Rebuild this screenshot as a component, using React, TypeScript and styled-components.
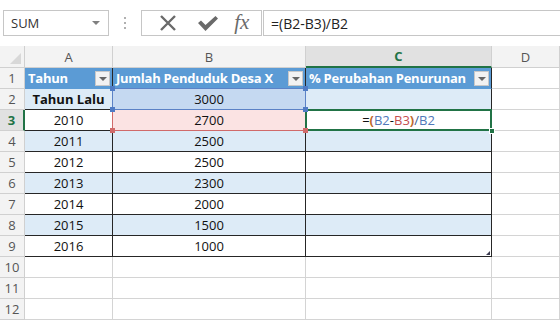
import React from "react";
import styled, { createGlobalStyle } from "styled-components";

const Global = createGlobalStyle`
  html, body { margin: 0; padding: 0; background: #fff; }
  body { font-family: "Open Sans", "Noto Sans", sans-serif; overflow: hidden; }
  * { box-sizing: border-box; }
`;

const Page = styled.div`
  width: 560px;
  height: 321px;
  overflow: hidden;
  background: #fff;
`;

const Toolbar = styled.div`
  height: 46px;
  display: flex;
  align-items: flex-start;
  padding: 10px 0 0 3px;
`;

const NameBox = styled.div`
  width: 106px;
  height: 26px;
  border: 1px solid #c6c6c6;
  display: flex;
  align-items: center;
  justify-content: space-between;
  padding: 0 8px 0 7px;
  font-size: 13px;
  color: #333;
`;

const SmallArrow = styled.span`
  width: 0;
  height: 0;
  border-left: 4px solid transparent;
  border-right: 4px solid transparent;
  border-top: 4px solid #808080;
`;

const Dots = styled.div`
  width: 32px;
  height: 26px;
  display: flex;
  flex-direction: column;
  align-items: center;
  justify-content: center;
  gap: 3px;
  span {
    width: 2px;
    height: 2px;
    background: #b0b0b0;
  }
`;

const ButtonBox = styled.div`
  width: 121px;
  height: 26px;
  border: 1px solid #c6c6c6;
  display: flex;
  align-items: center;
  justify-content: space-around;
  padding: 0 2px 0 6px;
`;

const Fx = styled.span`
  font-family: "Liberation Serif", "DejaVu Serif", serif;
  font-style: italic;
  font-size: 21px;
  color: #6a6a6a;
  line-height: 1;
  margin-top: -2px;
  margin-left: -4px;
`;

const FormulaInput = styled.div`
  flex: 1;
  height: 26px;
  border: 1px solid #c6c6c6;
  border-right: none;
  margin-left: 1px;
  display: flex;
  align-items: center;
  padding-left: 7px;
  font-size: 14px;
  color: #222;
`;

const Sheet = styled.div`
  display: grid;
  grid-template-columns: 25px 88px 193px 186px 1fr;
  grid-template-rows: 22px repeat(12, 21px);
`;

const HeadCell = styled.div<{ $sel?: boolean }>`
  position: relative;
  background: ${(p) => (p.$sel ? "#e1e1e1" : "#f3f3f3")};
  border-right: 1px solid #d0d0d0;
  border-bottom: ${(p) => (p.$sel ? "2px solid #217346" : "1px solid #d0d0d0")};
  display: flex;
  align-items: center;
  justify-content: center;
  font-size: 13px;
  color: ${(p) => (p.$sel ? "#217346" : "#555")};
  font-weight: ${(p) => (p.$sel ? 700 : 400)};
`;

const CornerTri = styled.span`
  position: absolute;
  right: 3px;
  bottom: 3px;
  width: 0;
  height: 0;
  border-left: 11px solid transparent;
  border-bottom: 11px solid #d8d8d8;
`;

const RowHead = styled.div<{ $sel?: boolean }>`
  background: ${(p) => (p.$sel ? "#e1e1e1" : "#f3f3f3")};
  border-right: ${(p) => (p.$sel ? "2px solid #217346" : "1px solid #d0d0d0")};
  border-bottom: 1px solid #d0d0d0;
  display: flex;
  align-items: center;
  justify-content: center;
  font-size: 13px;
  color: ${(p) => (p.$sel ? "#217346" : "#555")};
  font-weight: ${(p) => (p.$sel ? 700 : 400)};
`;

const Cell = styled.div<{
  $bg?: string;
  $bold?: boolean;
  $color?: string;
  $align?: string;
  $right?: string;
  $bottom?: string;
}>`
  position: relative;
  background: ${(p) => p.$bg || "#fff"};
  border-right: 1px solid ${(p) => p.$right || "#d4d4d4"};
  border-bottom: 1px solid ${(p) => p.$bottom || "#d4d4d4"};
  display: flex;
  align-items: center;
  justify-content: ${(p) => p.$align || "center"};
  padding: 0 3px;
  font-size: 13px;
  color: ${(p) => p.$color || "#111"};
  font-weight: ${(p) => (p.$bold ? 700 : 400)};
  white-space: nowrap;
`;

const TableHead = styled(Cell)`
  background: #5b9bd5;
  color: #fff;
  font-weight: 700;
  justify-content: flex-start;
  letter-spacing: -0.25px;
  border-bottom-color: #5b9bd5;
`;

const FilterBtn = styled.span`
  position: absolute;
  right: 2px;
  top: 3px;
  width: 15px;
  height: 15px;
  background: #f2f2f2;
  border: 1px solid #c8c8c8;
  display: flex;
  align-items: center;
  justify-content: center;
  &::after {
    content: "";
    border-left: 4px solid transparent;
    border-right: 4px solid transparent;
    border-top: 4px solid #666;
  }
`;

const Frame = styled.span<{ $c: string; $w?: number; $noTop?: boolean }>`
  position: absolute;
  left: -1px;
  top: ${(p) => (p.$noTop ? "0" : "-1px")};
  right: -1px;
  bottom: -1px;
  border: ${(p) => p.$w || 1}px solid ${(p) => p.$c};
  ${(p) => (p.$noTop ? "border-top: none;" : "")}
  pointer-events: none;
  z-index: 2;
`;

const Handle = styled.span<{ $c: string; $x: "l" | "r"; $y: "t" | "b" }>`
  position: absolute;
  width: 5px;
  height: 5px;
  background: ${(p) => p.$c};
  ${(p) => (p.$x === "l" ? "left: -3px;" : "right: -3px;")}
  ${(p) => (p.$y === "t" ? "top: -3px;" : "bottom: -3px;")}
  z-index: 3;
`;

const FillHandle = styled.span`
  position: absolute;
  right: -4px;
  bottom: -4px;
  width: 6px;
  height: 6px;
  background: #217346;
  border: 1px solid #fff;
  z-index: 4;
`;

const ResizeTri = styled.span`
  position: absolute;
  right: 1px;
  bottom: 1px;
  width: 0;
  height: 0;
  border-left: 4px solid transparent;
  border-bottom: 4px solid #3b3b50;
`;

const Part = styled.span<{ $c: string; $b?: boolean }>`
  color: ${(p) => p.$c};
  font-weight: ${(p) => (p.$b ? 700 : 400)};
`;

const DARK = "#262626";
const BAND = "#ddebf7";

const years = [
  ["2011", "2500"],
  ["2012", "2500"],
  ["2013", "2300"],
  ["2014", "2000"],
  ["2015", "1500"],
  ["2016", "1000"],
];

export default function App() {
  return (
    <Page>
      <Global />
      <Toolbar>
        <NameBox>
          <span>SUM</span>
          <SmallArrow />
        </NameBox>
        <Dots>
          <span />
          <span />
          <span />
        </Dots>
        <ButtonBox>
          <svg width="20" height="20" viewBox="0 0 20 20">
            <path d="M3 3 L17 17 M17 3 L3 17" stroke="#6a6a6a" strokeWidth="2.4" />
          </svg>
          <svg width="22" height="20" viewBox="0 0 22 20">
            <path d="M1 10 L4 7.5 L8.5 12 L18.5 3 L21 5.5 L8.5 18 Z" fill="#6a6a6a" />
          </svg>
          <Fx>fx</Fx>
        </ButtonBox>
        <FormulaInput>=(B2-B3)/B2</FormulaInput>
      </Toolbar>
      <Sheet>
        <HeadCell>
          <CornerTri />
        </HeadCell>
        <HeadCell>A</HeadCell>
        <HeadCell>B</HeadCell>
        <HeadCell $sel>C</HeadCell>
        <HeadCell>D</HeadCell>

        <RowHead>1</RowHead>
        <TableHead $right={DARK}>
          Tahun
          <FilterBtn />
        </TableHead>
        <TableHead $right={DARK}>
          Jumlah Penduduk Desa X
          <FilterBtn />
        </TableHead>
        <TableHead $right={DARK}>
          % Perubahan Penurunan
          <FilterBtn />
        </TableHead>
        <Cell />

        <RowHead>2</RowHead>
        <Cell $bg={BAND} $bold $right={DARK} $bottom={DARK}>
          Tahun Lalu
        </Cell>
        <Cell $bg="#c5d9f1" $right={DARK} $bottom={DARK}>
          3000
          <Frame $c="#5b82c6" />
          <Handle $c="#4f7bc4" $x="l" $y="t" />
          <Handle $c="#4f7bc4" $x="r" $y="t" />
          <Handle $c="#4f7bc4" $x="l" $y="b" />
          <Handle $c="#4f7bc4" $x="r" $y="b" />
        </Cell>
        <Cell $bg={BAND} $right={DARK} $bottom={DARK} />
        <Cell />

        <RowHead $sel>3</RowHead>
        <Cell $right={DARK} $bottom={DARK}>
          2010
        </Cell>
        <Cell $bg="#fbe3e3" $right={DARK} $bottom={DARK}>
          2700
          <Frame $c="#d06a6a" $noTop />
          <Handle $c="#d06a6a" $x="l" $y="b" />
          <Handle $c="#d06a6a" $x="r" $y="b" />
        </Cell>
        <Cell $right={DARK} $bottom={DARK}>
          <Part $c="#111">=</Part>
          <Part $c="#c0692a" $b>(</Part>
          <Part $c="#5078b8">B2</Part>
          <Part $c="#111">-</Part>
          <Part $c="#c44e4e">B3</Part>
          <Part $c="#c0692a" $b>)</Part>
          <Part $c="#3b5a8f">/</Part>
          <Part $c="#5078b8">B2</Part>
          <Frame $c="#217346" $w={2} />
          <FillHandle />
        </Cell>
        <Cell />

        {years.map(([y, v], i) => {
          const bg = i % 2 === 0 ? BAND : "#fff";
          const last = i === years.length - 1;
          return (
            <React.Fragment key={y}>
              <RowHead>{i + 4}</RowHead>
              <Cell $bg={bg} $right={DARK} $bottom={DARK}>
                {y}
              </Cell>
              <Cell $bg={bg} $right={DARK} $bottom={DARK}>
                {v}
              </Cell>
              <Cell $bg={bg} $right={DARK} $bottom={DARK}>
                {last && <ResizeTri />}
              </Cell>
              <Cell />
            </React.Fragment>
          );
        })}

        {[10, 11, 12].map((n) => (
          <React.Fragment key={n}>
            <RowHead>{n}</RowHead>
            <Cell />
            <Cell />
            <Cell />
            <Cell />
          </React.Fragment>
        ))}
      </Sheet>
    </Page>
  );
}
